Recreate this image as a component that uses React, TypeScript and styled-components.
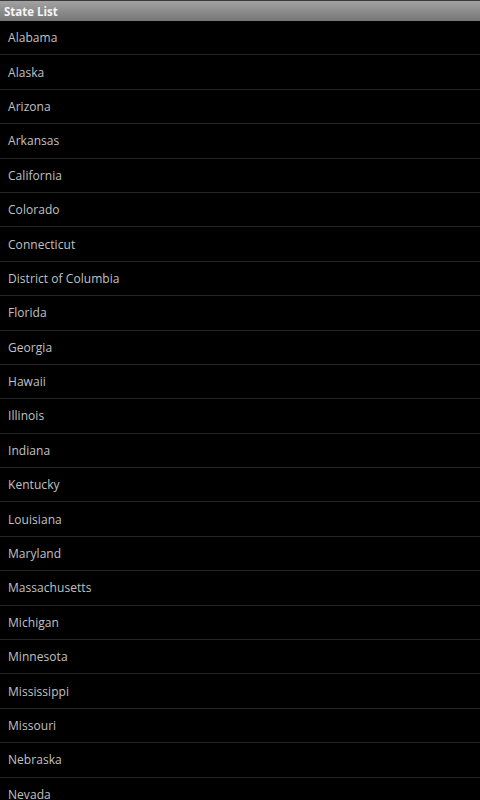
import React from 'react'
import styled, { createGlobalStyle } from 'styled-components'

const GlobalStyle = createGlobalStyle`
    html, body {
        margin: 0;
        padding: 0;
        background: #000;
        height: 100%;
        overflow: hidden;
    }
`

const Screen = styled.div`
    width: 480px;
    height: 800px;
    background: #000;
    display: flex;
    flex-direction: column;
    overflow: hidden;
    font-family: 'Open Sans', 'Noto Sans', sans-serif;
`

const TitleBar = styled.div`
    height: 20px;
    flex: none;
    display: flex;
    align-items: center;
    padding: 0 4px;
    border-top: 1px solid #3a3a3a;
    background: linear-gradient(to bottom, #a2a2a2 0%, #8c8c8c 50%, #767676 100%);
    color: #f4f4f4;
    font-size: 11.5px;
    font-weight: bold;
`

const List = styled.ul`
    list-style: none;
    margin: 0;
    padding: 0;
    flex: 1;
    overflow: hidden;
`

const Row = styled.li`
    height: 33.4px;
    display: flex;
    align-items: center;
    padding-left: 8px;
    border-bottom: 1px solid #262626;
    color: #c2c2c2;
    font-size: 12px;
    letter-spacing: 0.05px;
`

const states = [
    'Alabama',
    'Alaska',
    'Arizona',
    'Arkansas',
    'California',
    'Colorado',
    'Connecticut',
    'District of Columbia',
    'Florida',
    'Georgia',
    'Hawaii',
    'Illinois',
    'Indiana',
    'Kentucky',
    'Louisiana',
    'Maryland',
    'Massachusetts',
    'Michigan',
    'Minnesota',
    'Mississippi',
    'Missouri',
    'Nebraska',
    'Nevada',
]

const App: React.FC = () => (
    <>
        <GlobalStyle />
        <Screen>
            <TitleBar>{'State List'}</TitleBar>
            <List>
                {states.map(s => (
                    <Row key={s}>{s}</Row>
                ))}
            </List>
        </Screen>
    </>
)

export default App
